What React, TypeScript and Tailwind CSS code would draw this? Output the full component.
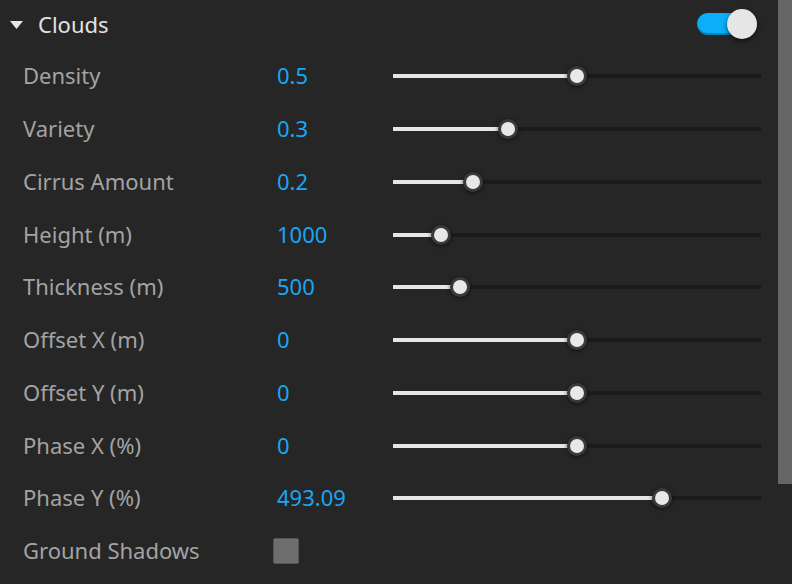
import React from "react";

const ROWS = [
  { label: "Density", value: "0.5", thumb: 184 },
  { label: "Variety", value: "0.3", thumb: 115 },
  { label: "Cirrus Amount", value: "0.2", thumb: 80 },
  { label: "Height (m)", value: "1000", thumb: 48 },
  { label: "Thickness (m)", value: "500", thumb: 67 },
  { label: "Offset X (m)", value: "0", thumb: 184 },
  { label: "Offset Y (m)", value: "0", thumb: 184 },
  { label: "Phase X (%)", value: "0", thumb: 184 },
  { label: "Phase Y (%)", value: "493.09", thumb: 269 },
];

function Slider({ pos }: { pos: number }) {
  return (
    <div className="relative h-[20px] w-[368px] flex items-center">
      <div className="h-[4px] w-full bg-[#1b1b1b]" />
      <div className="absolute left-0 h-[4px] bg-[#e6e6e6]" style={{ width: pos }} />
      <div
        className="absolute top-0 h-[20px] w-[20px] rounded-full bg-[#3a3a3a] flex items-center justify-center shadow-[0_1px_4px_rgba(0,0,0,0.6)]"
        style={{ left: pos - 10 }}
      >
        <div className="h-[14px] w-[14px] rounded-full bg-[#e8e8e8]" />
      </div>
    </div>
  );
}

export default function App() {
  return (
    <div
      className="w-[792px] h-[584px] bg-[#262626] flex overflow-hidden"
      style={{ fontFamily: '"Noto Sans", "Open Sans", sans-serif' }}
    >
      <div className="flex-1 flex flex-col">
        <div className="h-[50px] flex items-center pl-[10px] pr-[21px]">
          <svg width="13" height="9" viewBox="0 0 13 9" className="mt-[1px]">
            <polygon points="0,0 13,0 6.5,8" fill="#e6e6e6" />
          </svg>
          <span className="ml-[15px] text-[22px] text-[#e2e2e2] leading-none mb-[3px]">Clouds</span>
          <div className="ml-auto relative w-[60px] h-[30px] mt-[-3px]">
            <div className="absolute left-0 top-[4px] h-[22px] w-[48px] rounded-full bg-[#0aaff7] shadow-[inset_0_-2px_0_rgba(0,0,0,0.25)]" />
            <div className="absolute right-0 top-0 h-[30px] w-[30px] rounded-full bg-[#e6e6e6] shadow-[0_2px_5px_rgba(0,0,0,0.6)]" />
          </div>
        </div>
        {ROWS.map((r) => (
          <div key={r.label} className="h-[52.75px] flex items-center pl-[23px]">
            <div className="w-[254px] text-[22px] leading-none text-[#a3a3a3] mb-[2px]">{r.label}</div>
            <div className="w-[116px] text-[22px] leading-none text-[#18a6f5] mb-[2px]">{r.value}</div>
            <Slider pos={r.thumb} />
          </div>
        ))}
        <div className="h-[52.75px] flex items-center pl-[23px]">
          <div className="w-[250px] text-[22px] leading-none text-[#a3a3a3] mb-[2px]">Ground Shadows</div>
          <div className="h-[26px] w-[26px] bg-[#6e6e6e] border border-[#555] rounded-[2px]" />
        </div>
      </div>
      <div className="w-[14px] flex flex-col">
        <div className="h-[484px] bg-[#666666]" />
      </div>
    </div>
  );
}
